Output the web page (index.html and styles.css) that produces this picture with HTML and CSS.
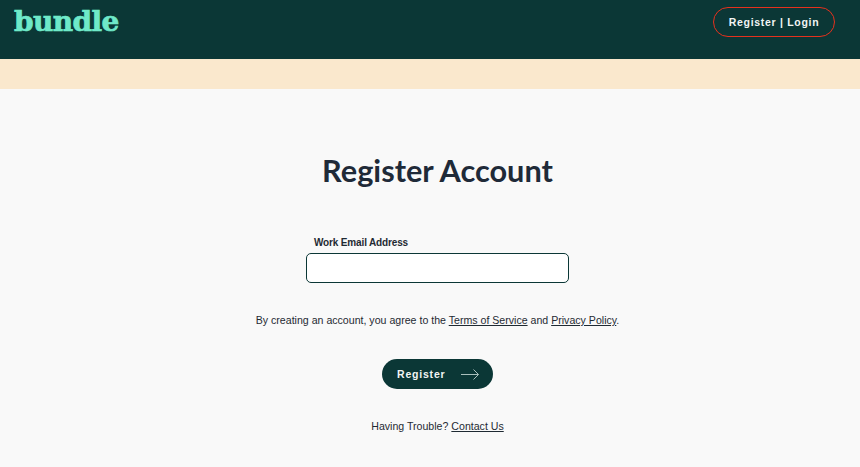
FILE: index.html
```html
<!DOCTYPE html>
<html lang="en">

<head>
  <meta charset="UTF-8">
  <meta name="viewport" content="width=device-width, initial-scale=1.0">
  <title>Register Account</title>
  <link rel="stylesheet" href="styles.css">
</head>

<body>

  <header class="top-bar">
    <a class="logo" href="#">bundle</a>
    <a class="auth-link" href="#">Register | Login</a>
  </header>
  <div class="banner"></div>

  <main class="content">
    <h1 class="title">Register Account</h1>

    <form class="register-form">
      <label class="field-label" for="email">Work Email Address</label>
      <input class="field-input" id="email" type="email">
    </form>

    <p class="terms">By creating an account, you agree to the <a href="#">Terms of Service</a> and <a href="#">Privacy Policy</a>.</p>

    <a class="register-btn" href="#">
      <span class="btn-text">Register</span>
      <svg class="arrow" width="18" height="11" viewBox="0 0 18 11" fill="none" stroke="#a9bfbc" stroke-width="1">
        <path d="M0 5.5h17.5"/>
        <path d="M12.5 .5l5 5-5 5"/>
      </svg>
    </a>

    <p class="help">Having Trouble? <a href="#">Contact Us</a></p>
  </main>

</body>

</html>
```

FILE: styles.css
```css
body {
  margin: 0;
  font-family: "Liberation Sans", Arial, sans-serif;
  background-color: #f9f9f9;
  color: #1f2a33;
}

a {
  color: inherit;
}

.top-bar {
  display: flex;
  justify-content: space-between;
  align-items: flex-start;
  height: 59px;
  padding: 0 25px 0 14px;
  background-color: #0b3736;
}

.logo {
  margin-top: 4px;
  font-family: "DejaVu Serif", serif;
  font-size: 28px;
  font-weight: 700;
  line-height: 36px;
  letter-spacing: -0.6px;
  color: #6fe9c9;
  text-decoration: none;
  -webkit-text-stroke: 0.7px #6fe9c9;
}

.auth-link {
  display: flex;
  align-items: center;
  justify-content: center;
  box-sizing: border-box;
  width: 122px;
  height: 30px;
  margin-top: 7px;
  border: 1px solid #e5311d;
  border-radius: 15px;
  font-size: 10.5px;
  font-weight: 700;
  letter-spacing: 0.7px;
  color: #f2f5f4;
  text-decoration: none;
}

.banner {
  height: 30px;
  background-color: #fae8cd;
}

.content {
  display: flex;
  flex-direction: column;
  align-items: center;
  padding-left: 15px;
}

.title {
  margin: 62px 0 0;
  font-family: Lato, sans-serif;
  font-size: 30.7px;
  font-weight: 700;
  line-height: 40px;
  color: #1f2a38;
}

.register-form {
  display: flex;
  flex-direction: column;
  width: 263px;
  margin-top: 45px;
}

.field-label {
  margin: 0 0 3px 8px;
  font-size: 10px;
  font-weight: 700;
  line-height: 14px;
  letter-spacing: -0.15px;
}

.field-input {
  box-sizing: border-box;
  width: 263px;
  height: 30px;
  border: 1px solid #0b3736;
  border-radius: 5px;
  background-color: #fff;
}

.terms {
  margin: 30px 0 0;
  font-size: 10.6px;
  line-height: 14px;
}

.register-btn {
  display: flex;
  align-items: center;
  justify-content: space-between;
  box-sizing: border-box;
  width: 111px;
  height: 30px;
  margin-top: 32px;
  padding: 0 14px 0 15px;
  border-radius: 15px;
  background-color: #0b3736;
  font-size: 10.5px;
  font-weight: 700;
  letter-spacing: 0.8px;
  color: #f2f5f4;
  text-decoration: none;
}

.btn-text {
  margin-bottom: 1px;
}

.help {
  margin: 30px 0 0;
  font-size: 10.6px;
  line-height: 14px;
}
```
